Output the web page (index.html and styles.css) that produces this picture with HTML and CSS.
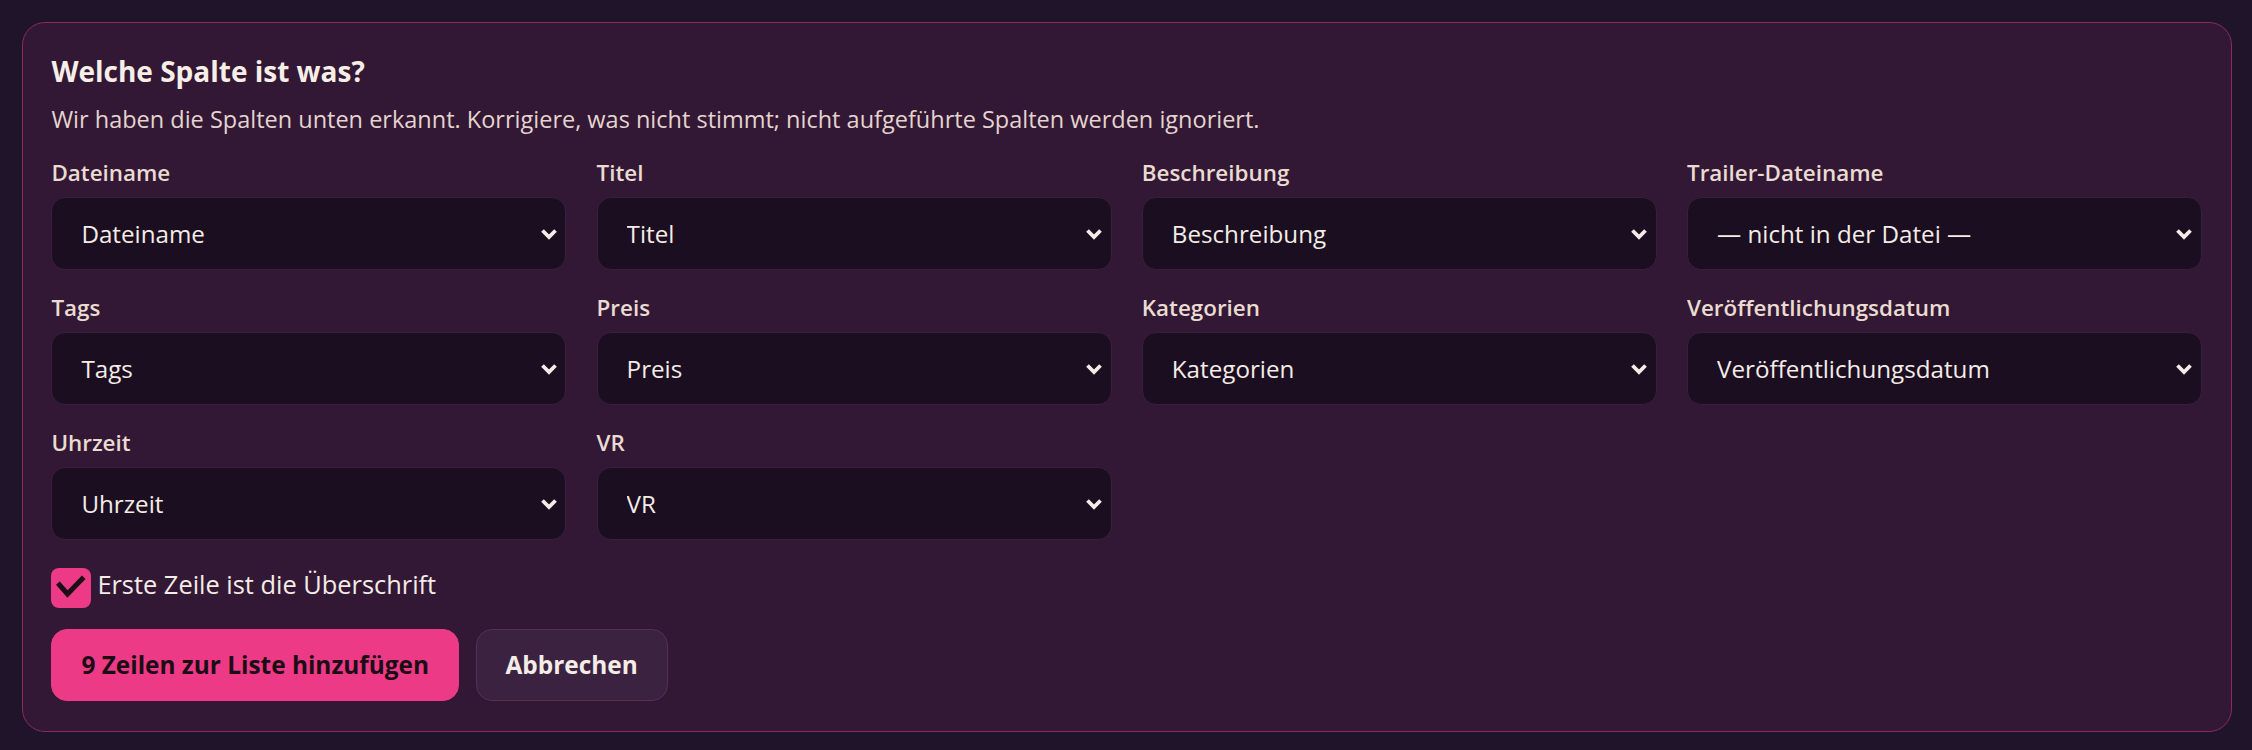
FILE: index.html
```html
<!DOCTYPE html>
<html lang="de">
<head>
    <meta charset="UTF-8">
    <meta name="viewport" content="width=device-width, initial-scale=1.0">
    <title>Spalten zuordnen</title>
    <link rel="stylesheet" href="styles.css">
</head>
<body>
    <div class="mapper">
        <h2>Welche Spalte ist was?</h2>
        <p class="hint">Wir haben die Spalten unten erkannt. Korrigiere, was nicht stimmt; nicht aufgeführte Spalten werden ignoriert.</p>

        <div class="fields">
            <div class="field">
                <label for="colFile">Dateiname</label>
                <select id="colFile">
                    <option>Dateiname</option>
                </select>
            </div>
            <div class="field">
                <label for="colTitle">Titel</label>
                <select id="colTitle">
                    <option>Titel</option>
                </select>
            </div>
            <div class="field">
                <label for="colDesc">Beschreibung</label>
                <select id="colDesc">
                    <option>Beschreibung</option>
                </select>
            </div>
            <div class="field">
                <label for="colTrailer">Trailer-Dateiname</label>
                <select id="colTrailer">
                    <option>— nicht in der Datei —</option>
                </select>
            </div>
            <div class="field">
                <label for="colTags">Tags</label>
                <select id="colTags">
                    <option>Tags</option>
                </select>
            </div>
            <div class="field">
                <label for="colPrice">Preis</label>
                <select id="colPrice">
                    <option>Preis</option>
                </select>
            </div>
            <div class="field">
                <label for="colCats">Kategorien</label>
                <select id="colCats">
                    <option>Kategorien</option>
                </select>
            </div>
            <div class="field">
                <label for="colDate">Veröffentlichungsdatum</label>
                <select id="colDate">
                    <option>Veröffentlichungsdatum</option>
                </select>
            </div>
            <div class="field">
                <label for="colTime">Uhrzeit</label>
                <select id="colTime">
                    <option>Uhrzeit</option>
                </select>
            </div>
            <div class="field">
                <label for="colVr">VR</label>
                <select id="colVr">
                    <option>VR</option>
                </select>
            </div>
        </div>

        <label class="check">
            <span class="check-box">
                <svg width="40" height="40" viewBox="0 0 40 40">
                    <path d="M8.5 17 L16.5 26 L31 11" fill="none" stroke="#1c0d17" stroke-width="5" stroke-linecap="square"/>
                </svg>
            </span>
            <span class="check-text">Erste Zeile ist die Überschrift</span>
        </label>

        <div class="actions">
            <button class="btn btn-primary">9 Zeilen zur Liste hinzufügen</button>
            <button class="btn btn-secondary">Abbrechen</button>
        </div>
    </div>
</body>
</html>
```

FILE: styles.css
```css
body {
    margin: 0;
    padding: 21.7px 20.4px 18px 21.7px;
    background-color: #20142a;
    font-family: "Open Sans", "Noto Sans", sans-serif;
    color: #f4ece6;
}

.mapper {
    background-color: #321834;
    border: 1.5px solid #8a2b60;
    border-radius: 23px;
    padding: 28.6px 28.7px 30.5px;
}

.mapper h2 {
    margin: 0 0 10.8px;
    font-size: 28px;
    line-height: 40px;
    font-weight: 700;
    color: #f7efe7;
}

.hint {
    margin: 0 0 18.6px;
    font-size: 23.5px;
    line-height: 35.25px;
    color: #e4d4cf;
}

.fields {
    display: grid;
    grid-template-columns: repeat(4, 1fr);
    column-gap: 30.3px;
    row-gap: 20.5px;
    margin-bottom: 28px;
}

.field {
    display: flex;
    flex-direction: column;
    gap: 8.2px;
}

.field label {
    font-size: 22.4px;
    line-height: 33px;
    font-weight: 600;
    color: #eadbd2;
}

.field select {
    appearance: none;
    -webkit-appearance: none;
    height: 73.3px;
    padding: 0 40px 0 29px;
    font-family: inherit;
    font-size: 24.2px;
    color: #f4ece6;
    background-color: #1b0e21;
    background-image: url("data:image/svg+xml,%3Csvg xmlns='http://www.w3.org/2000/svg' width='18' height='12' viewBox='0 0 18 12'%3E%3Cpath d='M2.5 2.5 L9 9 L15.5 2.5' fill='none' stroke='%23f4ece6' stroke-width='3.8'/%3E%3C/svg%3E");
    background-repeat: no-repeat;
    background-position: right 7.5px center;
    background-size: 18px 12px;
    border: 1.5px solid #36203c;
    border-radius: 14px;
}

.check {
    display: flex;
    align-items: flex-start;
    gap: 6px;
    height: 40px;
    margin-bottom: 21px;
}

.check-box {
    display: block;
    width: 40px;
    height: 40px;
    background-color: #ec3a86;
    border-radius: 8px;
}

.check-box svg {
    display: block;
}

.check-text {
    font-size: 25.4px;
    line-height: 32.3px;
    color: #f4ece6;
}

.actions {
    display: flex;
    gap: 16.5px;
}

.btn {
    font-family: inherit;
    font-size: 24.4px;
    font-weight: 700;
    line-height: 36px;
    padding: 16.75px 29px;
    border-radius: 16px;
    cursor: pointer;
}

.btn-primary {
    background-color: #ec3a86;
    border: 1.5px solid #ec3a86;
    color: #1c0d15;
}

.btn-secondary {
    background-color: #3c2241;
    border: 1.5px solid #55304f;
    color: #f4ece6;
}
```
